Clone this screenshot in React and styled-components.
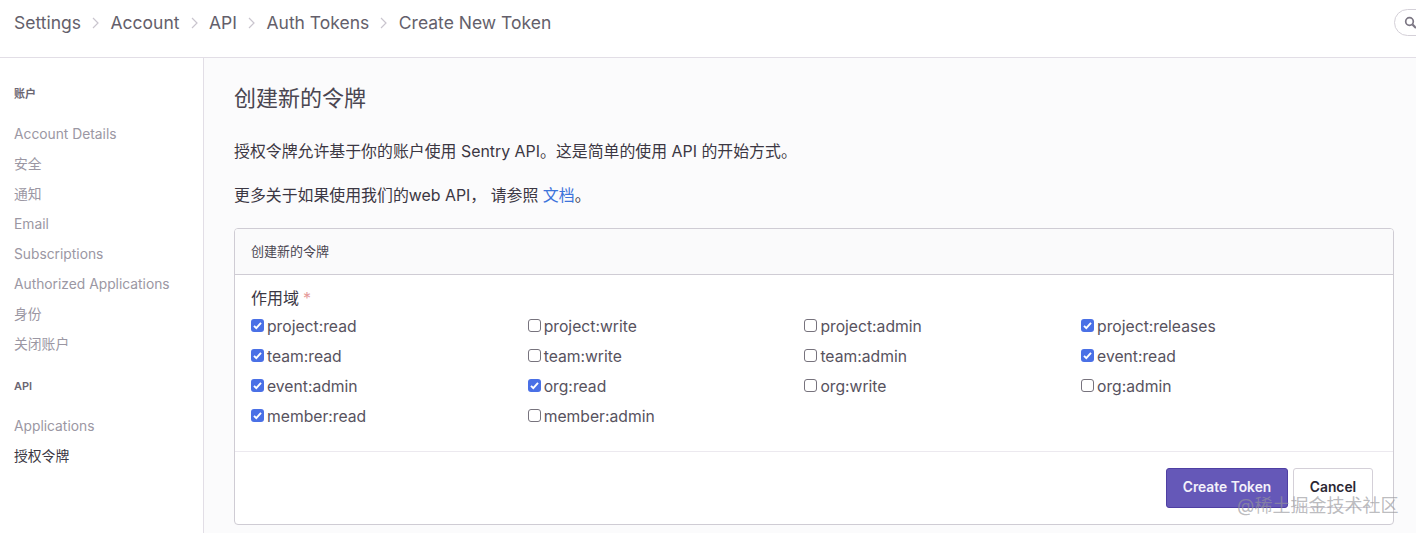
import styled, { createGlobalStyle } from 'styled-components'

const FONT = `Inter, "Noto Sans CJK SC", sans-serif`

const GlobalStyle = createGlobalStyle`
  html, body {
    margin: 0;
    height: 100%;
    overflow: hidden;
    background: #fff;
    font-family: ${FONT};
  }
  * { box-sizing: border-box; }
`

const Page = styled.div`
  position: relative;
  width: 1416px;
  height: 533px;
  overflow: hidden;
`

const Header = styled.header`
  display: flex;
  align-items: flex-start;
  height: 58px;
  border-bottom: 1px solid #e2dee6;
  padding: 9px 0 0 14px;
`

const Crumbs = styled.nav`
  flex: 0 0 1380px;
  display: flex;
  align-items: center;
  height: 27px;
  font-size: 17.5px;
  color: #645f6b;
`

const Crumb = styled.span`
  display: contents;
`

const Sep = styled.svg`
  width: 9px;
  height: 12px;
  margin: 0 10.5px 0 10px;
  fill: none;
  stroke: #c9c5ce;
  stroke-width: 1.2;
`

const Search = styled.div`
  flex: 0 0 200px;
  display: flex;
  align-items: center;
  height: 27px;
  padding-left: 9px;
  border: 1px solid #d4d0d8;
  border-radius: 14px;
  color: #7c7784;
`

const Body = styled.div`
  display: flex;
  height: 475px;
`

const Sidebar = styled.aside`
  flex: 0 0 204px;
  border-right: 1px solid #e2dee6;
  padding: 28px 14px 0;
`

const SideTitle = styled.div`
  font-size: 11px;
  font-weight: 600;
  line-height: 16px;
  color: #6b6672;
  margin-bottom: 17px;
`

const SideList = styled.ul`
  list-style: none;
  margin: 0 0 19px;
  padding: 0;
`

const SideItem = styled.li`
  height: 30px;
  line-height: 30px;
  font-size: 13.8px;
  color: ${({ $active }) => ($active ? '#3b3743' : '#9b97a3')};
`

const Main = styled.main`
  flex: 1;
  background: #fbfbfc;
  padding: 24px 22px 0 30px;
`

const Title = styled.h1`
  margin: 0 0 26px;
  font-size: 22px;
  font-weight: 400;
  line-height: 32px;
  color: #4a4651;
`

const Para = styled.p`
  margin: 0 0 20px;
  font-size: 15.9px;
  line-height: 24px;
  color: #3b3743;
`

const DocLink = styled.a`
  color: #3d74db;
`

const Panel = styled.section`
  margin-top: 20px;
  height: 297px;
  background: #fff;
  border: 1px solid #cfccd4;
  border-radius: 4px;
  overflow: hidden;
`

const PanelHead = styled.div`
  height: 46px;
  padding: 0 16px 2px;
  display: flex;
  align-items: center;
  font-size: 13px;
  color: #4a4651;
  background: #fafafb;
  border-bottom: 1px solid #cfccd4;
`

const PanelBody = styled.div`
  height: 176px;
  padding: 13px 16px 0;
`

const FieldLabel = styled.div`
  font-size: 16px;
  line-height: 20px;
  color: #3b3743;
  margin-bottom: 3px;
`

const Required = styled.span`
  margin-left: 4px;
  color: #e59a9a;
`

const ScopeGrid = styled.div`
  display: grid;
  grid-template-columns: repeat(4, 276.7px);
  grid-auto-rows: 30px;
`

const Scope = styled.label`
  display: flex;
  align-items: center;
  gap: 3px;
  font-size: 15.7px;
  color: #57525e;
`

const Box = styled.span`
  flex: 0 0 13px;
  width: 13px;
  height: 13px;
  display: flex;
  align-items: center;
  justify-content: center;
  border-radius: 3px;
  margin-top: -2px;
  background: ${({ $on }) => ($on ? '#4a70e6' : '#fff')};
  border: ${({ $on }) => ($on ? 'none' : '1px solid #77737d')};
`

const Footer = styled.div`
  height: 73px;
  border-top: 1px solid #ece9ef;
  display: flex;
  justify-content: flex-end;
  gap: 5px;
  padding: 16px 20px 0 0;
`

const Button = styled.button`
  height: 40px;
  padding: 0 0 2px;
  width: ${({ $primary }) => ($primary ? '122px' : '80px')};
  font-family: ${FONT};
  font-size: 13.8px;
  font-weight: 600;
  border-radius: 3px;
  color: ${({ $primary }) => ($primary ? '#f3f1fa' : '#2b2733')};
  background: ${({ $primary }) => ($primary ? '#6558b8' : '#fff')};
  border: 1px solid ${({ $primary }) => ($primary ? '#4f3fa3' : '#d4d0d8')};
`

const Watermark = styled.div`
  position: absolute;
  left: 1237px;
  top: 494px;
  font-size: 18px;
  line-height: 24px;
  white-space: nowrap;
  color: rgba(150, 150, 155, 0.65);
`

const crumbs = ['Settings', 'Account', 'API', 'Auth Tokens', 'Create New Token']

const scopes = [
  ['project:read', true],
  ['project:write', false],
  ['project:admin', false],
  ['project:releases', true],
  ['team:read', true],
  ['team:write', false],
  ['team:admin', false],
  ['event:read', true],
  ['event:admin', true],
  ['org:read', true],
  ['org:write', false],
  ['org:admin', false],
  ['member:read', true],
  ['member:admin', false],
]

function App() {
  return (
    <Page>
      <GlobalStyle />
      <Header>
        <Crumbs>
          {crumbs.map((c, i) => (
            <Crumb key={c}>
              {c}
              {i < crumbs.length - 1 && (
                <Sep viewBox="0 0 9 12">
                  <path d="M2 1l5 5-5 5" />
                </Sep>
              )}
            </Crumb>
          ))}
        </Crumbs>
        <Search>
          <svg width="13" height="13" viewBox="0 0 13 13" fill="none" stroke="currentColor">
            <circle cx="5.5" cy="5.5" r="3.8" strokeWidth="1.7" />
            <path d="M8.5 8.5L12 12" strokeWidth="2.2" />
          </svg>
        </Search>
      </Header>
      <Body>
        <Sidebar>
          <SideTitle>账户</SideTitle>
          <SideList>
            <SideItem>Account Details</SideItem>
            <SideItem>安全</SideItem>
            <SideItem>通知</SideItem>
            <SideItem>Email</SideItem>
            <SideItem>Subscriptions</SideItem>
            <SideItem>Authorized Applications</SideItem>
            <SideItem>身份</SideItem>
            <SideItem>关闭账户</SideItem>
          </SideList>
          <SideTitle>API</SideTitle>
          <SideList>
            <SideItem>Applications</SideItem>
            <SideItem $active>授权令牌</SideItem>
          </SideList>
        </Sidebar>
        <Main>
          <Title>创建新的令牌</Title>
          <Para>授权令牌允许基于你的账户使用 Sentry API。这是简单的使用 API 的开始方式。</Para>
          <Para>
            更多关于如果使用我们的web API， 请参照 <DocLink>文档</DocLink>。
          </Para>
          <Panel>
            <PanelHead>创建新的令牌</PanelHead>
            <PanelBody>
              <FieldLabel>
                作用域<Required>*</Required>
              </FieldLabel>
              <ScopeGrid>
                {scopes.map(([name, on]) => (
                  <Scope key={name}>
                    <Box $on={on}>
                      {on && (
                        <svg width="9" height="9" viewBox="0 0 9 9" fill="none" stroke="#fff" strokeWidth="1.9">
                          <path d="M1 4.8l2.3 2.4L8 1.8" />
                        </svg>
                      )}
                    </Box>
                    {name}
                  </Scope>
                ))}
              </ScopeGrid>
            </PanelBody>
            <Footer>
              <Button $primary>Create Token</Button>
              <Button>Cancel</Button>
            </Footer>
          </Panel>
        </Main>
      </Body>
      <Watermark>@稀土掘金技术社区</Watermark>
    </Page>
  )
}

export default App
